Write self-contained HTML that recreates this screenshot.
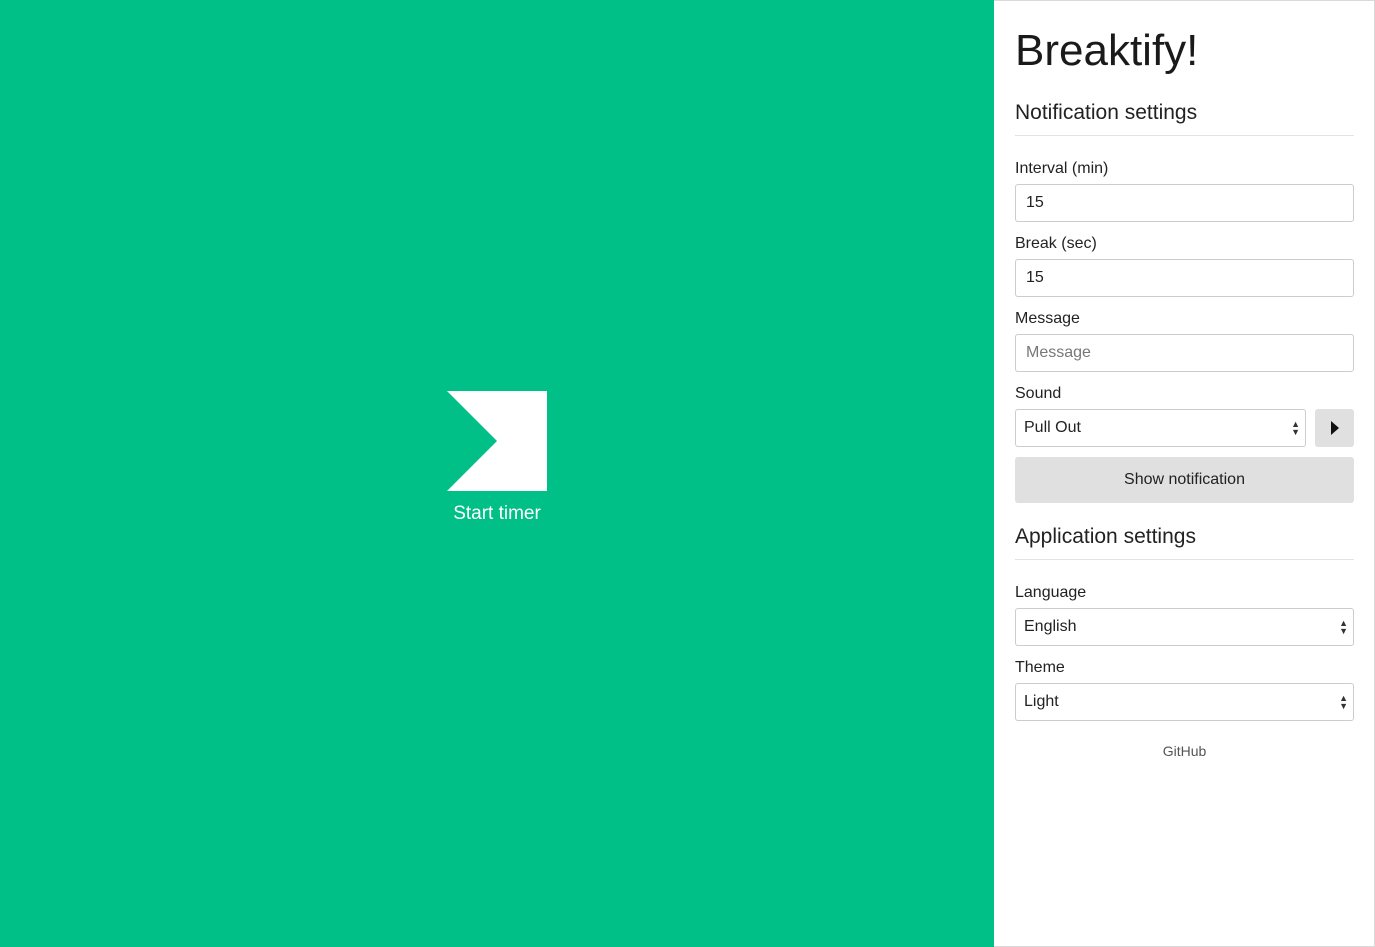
<!DOCTYPE html>
<html><head><style>
*{box-sizing:border-box}
body{margin:0;width:1375px;height:947px;overflow:hidden;font-family:"Liberation Sans",sans-serif;background:#fff;position:relative}
#left{position:absolute;left:0;top:0;width:994px;height:947px;background:#00c087}
#right{position:absolute;left:994px;top:0;width:381px;height:947px;border:1px solid #d9d9d9;border-left:none}
h1{position:absolute;left:21px;top:25px;margin:0;font-weight:400;font-size:44px;color:#1a1a1a}
h2{position:absolute;left:21px;margin:0;font-weight:400;font-size:21px;color:#222}
.hr{position:absolute;left:21px;width:339px;height:1px;background:#e3e3e3}
.lbl{position:absolute;left:21px;font-size:16px;color:#222}
.in{position:absolute;left:21px;width:339px;height:38px;border:1px solid #ccc;border-radius:3px;font-size:16px;padding:9px 10px;color:#222}
.sel{padding-left:8px}
.arr{position:absolute;right:5px;top:10px;font-size:9px;line-height:8px;color:#333}
</style></head><body>
<div id="left">
<svg style="position:absolute;left:447px;top:391px" width="100" height="100"><polygon points="0,0 100,0 100,100 0,100 50,50" fill="#fff"/></svg>
<div style="position:absolute;left:447px;width:100px;top:503px;text-align:center;color:#fff;font-size:19px">Start timer</div>
</div>
<div id="right">
<h1>Breaktify!</h1>
<h2 style="top:100px">Notification settings</h2>
<div class="hr" style="top:134px"></div>
<div class="lbl" style="top:159px">Interval (min)</div>
<div class="in" style="top:183px">15</div>
<div class="lbl" style="top:234px">Break (sec)</div>
<div class="in" style="top:258px">15</div>
<div class="lbl" style="top:309px">Message</div>
<div class="in" style="top:333px;color:#777">Message</div>
<div class="lbl" style="top:384px">Sound</div>
<div class="in sel" style="top:408px;width:291px">Pull Out<div class="arr">▲<br>▼</div></div>
<div style="position:absolute;left:321px;top:408px;width:39px;height:38px;background:#e0e0e0;border-radius:3px"><svg width="39" height="38"><polygon points="16,12 24,19 16,26" fill="#111"/></svg></div>
<div style="position:absolute;left:21px;top:456px;width:339px;height:46px;background:#e0e0e0;border-radius:3px;text-align:center;line-height:46px;font-size:16px;color:#222">Show notification</div>
<h2 style="top:524px">Application settings</h2>
<div class="hr" style="top:558px"></div>
<div class="lbl" style="top:583px">Language</div>
<div class="in sel" style="top:607px">English<div class="arr">▲<br>▼</div></div>
<div class="lbl" style="top:658px">Theme</div>
<div class="in sel" style="top:682px">Light<div class="arr">▲<br>▼</div></div>
<div style="position:absolute;left:21px;width:339px;top:742px;text-align:center;font-size:14px;color:#555">GitHub</div>
</div>
</body></html>
